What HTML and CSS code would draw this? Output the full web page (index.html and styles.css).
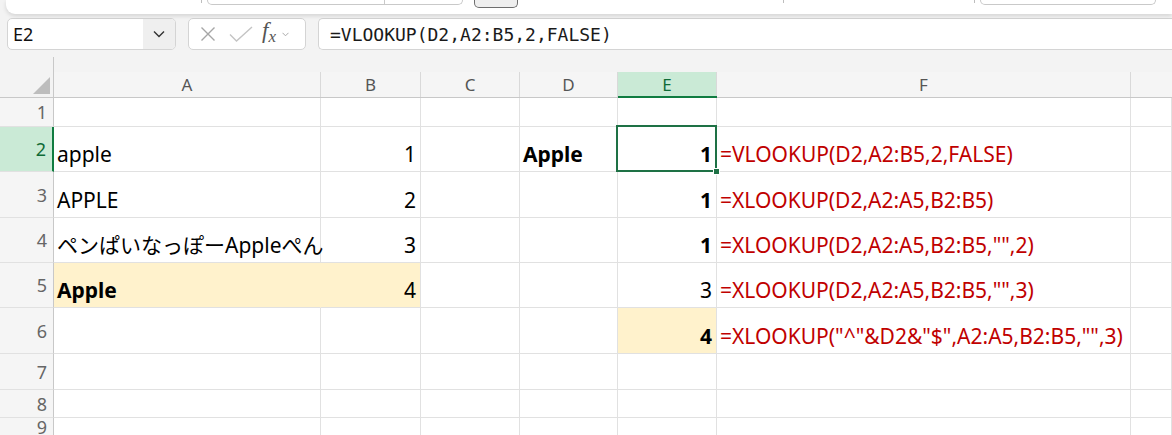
FILE: index.html
```html
<!DOCTYPE html>
<html lang="ja">
<head>
  <meta charset="UTF-8">
  <title>Book1 - Excel</title>
  <meta name="viewport" content="width=device-width, initial-scale=1.0">
  <link rel="stylesheet" href="styles.css">
</head>
<body>

  <!-- bottom edge of the ribbon -->
  <div class="ribbon">
    <span class="tick t1"></span>
    <span class="seg"><span class="seg-a"></span></span>
    <span class="btn"></span>
    <span class="tick t2"></span>
    <span class="tick t3"></span>
    <span class="seg seg-r"></span>
  </div>

  <div class="toolbar">
    <div class="namebox">
      <span class="name">E2</span>
      <span class="drop">
        <svg width="12" height="8" viewBox="0 0 12 8"><path d="M1 1.5 6 6.5 11 1.5" fill="none" stroke="#333" stroke-width="1.4"/></svg>
      </span>
    </div>
    <div class="fxbox">
      <svg class="ico-x" width="16" height="16" viewBox="0 0 16 16"><path d="M1.5 1.5 14.5 14.5M14.5 1.5 1.5 14.5" stroke="#a6a6a6" stroke-width="1.4"/></svg>
      <svg class="ico-ok" width="24" height="16" viewBox="0 0 24 16"><path d="M1 8.5 7.5 15 23 1" fill="none" stroke="#c4c4c4" stroke-width="1.4"/></svg>
      <span class="fx"><i>f</i><sub>x</sub></span>
      <svg class="ico-more" width="7" height="5" viewBox="0 0 7 5"><path d="M0.5 0.8 3.5 3.8 6.5 0.8" fill="none" stroke="#aaa" stroke-width="1"/></svg>
    </div>
    <div class="formula">=VLOOKUP(D2,A2:B5,2,FALSE)</div>
  </div>

  <div class="sheet">
    <!-- column headers -->
    <div class="colhead corner"><span><i class="tri"></i></span></div>
    <div class="colhead"><span>A</span></div>
    <div class="colhead"><span>B</span></div>
    <div class="colhead"><span>C</span></div>
    <div class="colhead"><span>D</span></div>
    <div class="colhead active"><span>E</span></div>
    <div class="colhead"><span>F</span></div>
    <div class="colhead last"><span></span></div>

    <!-- 1 -->
    <div class="rowhead">1</div>
    <div class="c"></div><div class="c"></div><div class="c"></div><div class="c"></div><div class="c"></div><div class="c"></div><div class="c"></div>

    <!-- 2 -->
    <div class="rowhead active">2</div>
    <div class="c">apple</div>
    <div class="c n">1</div>
    <div class="c"></div>
    <div class="c b">Apple</div>
    <div class="c n b current">1</div>
    <div class="c f">=VLOOKUP(D2,A2:B5,2,FALSE)</div>
    <div class="c"></div>

    <!-- 3 -->
    <div class="rowhead">3</div>
    <div class="c">APPLE</div>
    <div class="c n">2</div>
    <div class="c"></div>
    <div class="c"></div>
    <div class="c n b">1</div>
    <div class="c f">=XLOOKUP(D2,A2:A5,B2:B5)</div>
    <div class="c"></div>

    <!-- 4 -->
    <div class="rowhead">4</div>
    <div class="c">ペンぱいなっぽーAppleぺん</div>
    <div class="c n">3</div>
    <div class="c"></div>
    <div class="c"></div>
    <div class="c n b">1</div>
    <div class="c f">=XLOOKUP(D2,A2:A5,B2:B5,"",2)</div>
    <div class="c"></div>

    <!-- 5 -->
    <div class="rowhead">5</div>
    <div class="c b fill joined">Apple</div>
    <div class="c n fill">4</div>
    <div class="c"></div>
    <div class="c"></div>
    <div class="c n">3</div>
    <div class="c f">=XLOOKUP(D2,A2:A5,B2:B5,"",3)</div>
    <div class="c"></div>

    <!-- 6 -->
    <div class="rowhead">6</div>
    <div class="c"></div>
    <div class="c"></div>
    <div class="c"></div>
    <div class="c"></div>
    <div class="c n b fill">4</div>
    <div class="c f">=XLOOKUP("^"&amp;D2&amp;"$",A2:A5,B2:B5,"",3)</div>
    <div class="c"></div>

    <!-- 7 -->
    <div class="rowhead">7</div>
    <div class="c"></div><div class="c"></div><div class="c"></div><div class="c"></div><div class="c"></div><div class="c"></div><div class="c"></div>

    <!-- 8 -->
    <div class="rowhead">8</div>
    <div class="c"></div><div class="c"></div><div class="c"></div><div class="c"></div><div class="c"></div><div class="c"></div><div class="c"></div>

    <!-- 9 -->
    <div class="rowhead">9</div>
    <div class="c"></div><div class="c"></div><div class="c"></div><div class="c"></div><div class="c"></div><div class="c"></div><div class="c"></div>
  </div>

</body>
</html>
```

FILE: styles.css
```css
body {
  margin: 0;
  background: #f3f3f3;
  font-family: 'Noto Sans', 'Noto Sans CJK JP', sans-serif;
  color: #000;
  height: 435px;
  overflow: hidden;
}

/* ribbon edge */
.ribbon {
  height: 14px;
  margin-left: 6px;
  background: #fff;
  border-radius: 0 0 0 9px;
  box-shadow: 0 2px 4px rgba(0,0,0,0.13);
  display: flex;
  align-items: flex-start;
  position: relative;
  z-index: 1;
}
.tick {
  width: 1px;
  height: 3px;
  background: #bdbdbd;
}
.t1 { margin-left: 195px; }
.t2 { margin-left: 265px; }
.t3 { margin-left: 190px; }
.seg {
  margin-left: 5px;
  width: 254px;
  height: 4px;
  border: 1px solid #c9c9c9;
  border-top: none;
  border-radius: 0 0 6px 6px;
  display: flex;
}
.seg-a {
  width: 176px;
  border-right: 1px solid #c9c9c9;
}
.seg-r {
  width: 174px;
}
.btn {
  margin-left: 11px;
  width: 42px;
  height: 7px;
  border: 1px solid #6e6e6e;
  border-top: none;
  border-radius: 0 0 5px 5px;
  background: #efefef;
}

/* name box + formula bar */
.toolbar {
  display: flex;
  gap: 12px;
  height: 32px;
  margin-top: 4px;
  padding-left: 7px;
}
.namebox {
  width: 169px;
  box-sizing: border-box;
  display: flex;
  background: #fff;
  border: 1px solid #d4d4d4;
  border-radius: 5px;
  overflow: hidden;
}
.name {
  flex: 1;
  padding-left: 5px;
  font-size: 18px;
  line-height: 30px;
  color: #111;
}
.drop {
  width: 32px;
  background: #efefef;
  display: flex;
  align-items: center;
  justify-content: center;
}
.fxbox {
  width: 118px;
  box-sizing: border-box;
  background: #fff;
  border: 1px solid #d4d4d4;
  border-radius: 5px;
  display: flex;
  align-items: center;
  padding-left: 11px;
}
.ico-ok { margin-left: 13px; }
.fx {
  margin-left: 9px;
  font-family: 'Liberation Serif', serif;
  font-size: 23px;
  color: #555;
  line-height: 1;
  margin-top: -4px;
}
.fx sub {
  font-size: 17px;
  vertical-align: -4px;
  font-style: italic;
}
.ico-more { margin-left: 6px; }
.formula {
  flex: 1;
  background: #fff;
  border: 1px solid #d4d4d4;
  border-right: none;
  border-radius: 5px 0 0 5px;
  padding-left: 11px;
  display: flex;
  align-items: center;
  font-family: 'DejaVu Sans Mono', 'Liberation Mono', monospace;
  font-size: 18px;
  color: #1a1a1a;
}

/* grid */
.sheet {
  display: grid;
  grid-template-columns: 54px 267px 100px 99px 98px 99px 414px 1fr;
  grid-template-rows: 48px 29px 45px 46px 45px 45px 46px 36px 28px 18px;
  background: #fff;
}
.sheet > div {
  box-sizing: border-box;
}
.colhead {
  background: #f3f3f3;
  border-bottom: 1px solid #c8c8c8;
  display: flex;
  align-items: flex-end;
}
.colhead span {
  flex: 1;
  height: 25px;
  box-sizing: border-box;
  border-right: 1px solid #d9d9d9;
  background: #f5f5f5;
  display: flex;
  align-items: center;
  justify-content: center;
  font-size: 17px;
  color: #555;
}
.colhead.last span { border-right: none; }
.colhead.active {
  border-bottom: 2px solid #107c41;
}
.colhead.active span {
  height: 24px;
  background: #caead6;
  color: #0f6b37;
}
.corner span {
  height: 40px;
  background: #f3f3f3;
  border-right-color: #c8c8c8;
  align-items: flex-end;
  justify-content: flex-end;
  padding: 0 3px 3px 0;
}
.tri {
  width: 17px;
  height: 17px;
  background: #bdbdbd;
  clip-path: polygon(100% 0, 100% 100%, 0 100%);
}
.rowhead {
  background: #f5f5f5;
  border-right: 1px solid #c8c8c8;
  border-bottom: 1px solid #e1e1e1;
  display: flex;
  align-items: center;
  justify-content: flex-end;
  padding-right: 6px;
  font-size: 18px;
  color: #666;
  overflow: hidden;
}
.rowhead:last-child {
  align-items: flex-start;
  padding-top: 4px;
  line-height: 18px;
}
.rowhead.active {
  background: #caead6;
  border-right: 2px solid #107c41;
  color: #0f6b37;
}
.c {
  border-right: 1px solid #e1e1e1;
  border-bottom: 1px solid #e1e1e1;
  display: flex;
  align-items: flex-end;
  padding: 0 4px 6px 3px;
  font-size: 21px;
  line-height: 21px;
  white-space: nowrap;
}
.n { justify-content: flex-end; }
.b { font-weight: 700; }
.f { color: #c00000; }
.fill { background: #fff2cc; }
.joined { border-right-color: #fff2cc; }

/* active cell outline and fill handle */
.current { position: relative; }
.current::before {
  content: '';
  position: absolute;
  left: -2px;
  top: -2px;
  right: -1px;
  bottom: -1px;
  border: 2px solid #1e7145;
  z-index: 2;
}
.current::after {
  content: '';
  position: absolute;
  right: -4px;
  bottom: -4px;
  width: 5px;
  height: 5px;
  background: #1e7145;
  border: 1px solid #fff;
  z-index: 3;
}
```
